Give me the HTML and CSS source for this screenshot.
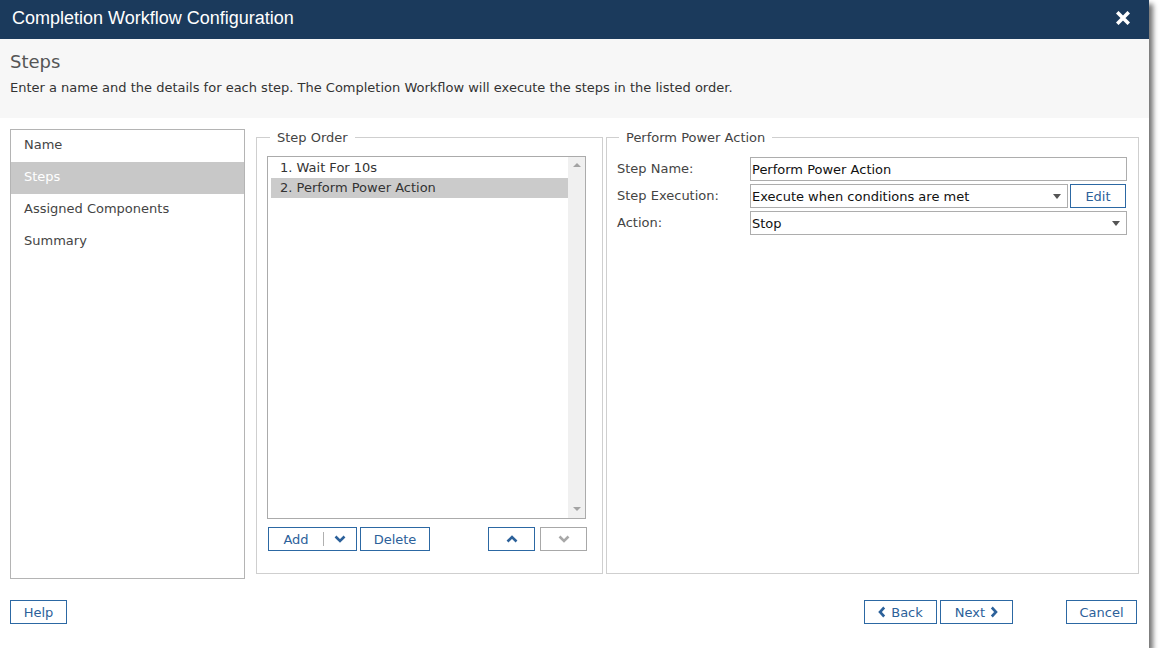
FILE: index.html
```html
<!DOCTYPE html>
<html>
<head>
<meta charset="utf-8">
<link rel="stylesheet" href="styles.css">
</head>
<body>
<div class="dialog">
  <div class="titlebar">
    <span class="title">Completion Workflow Configuration</span>
    <svg class="close" width="14" height="14" viewBox="0 0 14 14"><path d="M2.5 2.5 L11.5 11.5 M11.5 2.5 L2.5 11.5" stroke="#fff" stroke-width="3.6" stroke-linecap="square"/></svg>
  </div>
  <div class="header">
    <h1 class="heading">Steps</h1>
    <p class="desc">Enter a name and the details for each step. The Completion Workflow will execute the steps in the listed order.</p>
  </div>
  <div class="main">
    <ul class="nav">
      <li class="nav-item">Name</li>
      <li class="nav-item active">Steps</li>
      <li class="nav-item">Assigned Components</li>
      <li class="nav-item">Summary</li>
    </ul>
    <fieldset class="group steporder">
      <legend class="legend">Step Order</legend>
      <div class="listbox">
        <ul class="list">
          <li class="list-item">1. Wait For 10s</li>
          <li class="list-item selected">2. Perform Power Action</li>
        </ul>
        <div class="scrollbar">
          <span class="arrow-up"></span>
          <span class="arrow-down"></span>
        </div>
      </div>
      <div class="list-actions">
        <div class="split">
          <button class="btn split-main">Add</button>
          <span class="split-div"></span>
          <button class="btn split-toggle"><svg width="12" height="8" viewBox="0 0 12 8"><path d="M1.5 1.5 L6 6 L10.5 1.5" fill="none" stroke="#2c619a" stroke-width="2.6"/></svg></button>
        </div>
        <button class="btn delete">Delete</button>
        <span class="spacer"></span>
        <button class="btn move"><svg width="12" height="8" viewBox="0 0 12 8"><path d="M1.5 6.5 L6 2 L10.5 6.5" fill="none" stroke="#2c619a" stroke-width="2.6"/></svg></button>
        <button class="btn move disabled"><svg width="12" height="8" viewBox="0 0 12 8"><path d="M1.5 1.5 L6 6 L10.5 1.5" fill="none" stroke="#a8a8a8" stroke-width="2.6"/></svg></button>
      </div>
    </fieldset>
    <fieldset class="group details">
      <legend class="legend">Perform Power Action</legend>
      <div class="form">
        <label class="label">Step Name:</label>
        <input class="field" type="text" value="Perform Power Action">
        <label class="label">Step Execution:</label>
        <div class="field-row">
          <div class="select grow"><span>Execute when conditions are met</span><span class="caret"></span></div>
          <button class="btn edit">Edit</button>
        </div>
        <label class="label">Action:</label>
        <div class="select"><span>Stop</span><span class="caret"></span></div>
      </div>
    </fieldset>
  </div>
  <div class="footer">
    <button class="btn help">Help</button>
    <span class="spacer"></span>
    <button class="btn nav-btn"><svg width="8" height="12" viewBox="0 0 8 12"><path d="M6.2 1.5 L2 6 L6.2 10.5" fill="none" stroke="#2c619a" stroke-width="2.6"/></svg>Back</button>
    <button class="btn nav-btn next">Next<svg width="8" height="12" viewBox="0 0 8 12"><path d="M1.8 1.5 L6 6 L1.8 10.5" fill="none" stroke="#2c619a" stroke-width="2.6"/></svg></button>
    <button class="btn cancel">Cancel</button>
  </div>
</div>
</body>
</html>
```
FILE: styles.css
```css
* { box-sizing: border-box; }
html, body { margin: 0; padding: 0; background: #fff; }
body { font-family: "DejaVu Sans", Verdana, sans-serif; font-size: 13px; color: #444; }

.dialog {
  width: 1149px;
  height: 648px;
  background: #fff;
  box-shadow: 4px 4px 5px rgba(0,0,0,0.55);
  display: flex;
  flex-direction: column;
}

.titlebar {
  height: 39px;
  background: #1b3a5c;
  display: flex;
  align-items: center;
  padding: 0 19px 0 12px;
}
.title {
  font-family: "Liberation Sans", Arial, sans-serif;
  font-size: 18px;
  color: #fff;
  flex: 1;
  padding-bottom: 2px;
}
.close { display: block; margin-bottom: 3px; }

.header {
  height: 79px;
  background: #f7f7f7;
  padding: 12px 10px 0;
}
.heading {
  margin: 0;
  font-size: 18px;
  font-weight: normal;
  line-height: 22px;
  color: #555;
}
.desc {
  margin: 6px 0 0;
  font-size: 13px;
  line-height: 17px;
  color: #333;
}

.main {
  display: flex;
  align-items: flex-start;
  padding: 11px 10px 0 10px;
  height: 461px;
}
.main > * { flex-shrink: 0; }

.nav {
  list-style: none;
  margin: 0;
  padding: 0;
  width: 235px;
  height: 450px;
  border: 1px solid #b4b4b4;
  margin-right: 11px;
}
.nav-item {
  height: 32px;
  line-height: 29px;
  padding-left: 13px;
  color: #444;
}
.nav-item.active { background: #c8c8c8; color: #fff; }

.group {
  margin: 0;
  border: 1px solid #cfcfcf;
  height: 445px;
  padding: 0 10px 10px;
}
.legend {
  margin-left: 3px;
  padding: 0 7px;
  line-height: 17px;
  color: #444;
}

.steporder { width: 347px; margin-right: 3px; }
.details { width: 533px; padding: 0 11px 10px 10px; }
.details .legend { margin-left: 2px; }

.listbox {
  margin-top: 10px;
  width: 319px;
  height: 363px;
  border: 1px solid #ababab;
  display: flex;
}
.list {
  list-style: none;
  margin: 0;
  padding: 1px 0 0 3px;
  flex: 1;
}
.list-item {
  height: 20px;
  line-height: 20px;
  padding-left: 9px;
  color: #333;
}
.list-item.selected { background: #cbcbcb; }
.scrollbar {
  width: 17px;
  background: #f0f0f0;
  display: flex;
  flex-direction: column;
  justify-content: space-between;
  align-items: center;
  padding: 6px 0 7px;
}
.arrow-up, .arrow-down {
  width: 0; height: 0;
  border-left: 4px solid transparent;
  border-right: 4px solid transparent;
}
.arrow-up { border-bottom: 4px solid #a3a3a3; }
.arrow-down { border-top: 4px solid #a3a3a3; }

.list-actions {
  display: flex;
  margin-top: 8px;
  padding-left: 1px;
  width: 320px;
  height: 24px;
}
.spacer { flex: 1; }

.btn {
  font-family: "DejaVu Sans", Verdana, sans-serif;
  font-size: 13px;
  height: 24px;
  background: #fff;
  color: #2c619a;
  border: 1px solid #2c68a3;
  padding: 0;
  display: inline-flex;
  align-items: center;
  justify-content: center;
  gap: 5px;
  cursor: pointer;
}
.split {
  display: flex;
  align-items: center;
  border: 1px solid #2c68a3;
  width: 89px;
  height: 24px;
  margin-right: 3px;
}
.split .btn { border: none; height: 22px; }
.split-main { width: 54px; }
.split-div { width: 1px; height: 14px; background: #b0b0b0; }
.split-toggle { flex: 1; }
.delete { width: 70px; }
.move { width: 47px; }
.move + .move { margin-left: 5px; }
.move.disabled { border-color: #a8a8a8; }

.form {
  display: grid;
  grid-template-columns: 133px 1fr;
  grid-auto-rows: 24px;
  row-gap: 3px;
  margin-top: 11px;
  align-items: center;
}
.label { color: #444; line-height: 24px; }
.field {
  font-family: "DejaVu Sans", Verdana, sans-serif;
  font-size: 13px;
  color: #111;
  height: 24px;
  width: 377px;
  border: 1px solid #adadad;
  padding: 0 1px;
  margin: 0;
  outline: none;
}
.field-row { display: flex; gap: 2px; width: 376px; height: 24px; }
.select {
  height: 24px;
  width: 377px;
  border: 1px solid #adadad;
  display: flex;
  align-items: center;
  padding: 0 6px 0 1px;
  color: #111;
}
.select span:first-child { flex: 1; }
.select.grow { flex: 1; width: auto; }
.caret {
  width: 0; height: 0;
  border-left: 4.5px solid transparent;
  border-right: 4.5px solid transparent;
  border-top: 5px solid #555;
}
.edit { width: 56px; }

.footer {
  display: flex;
  padding: 21px 12px 0 10px;
}
.help { width: 57px; }
.nav-btn { width: 73px; }
.next { margin-left: 3px; }
.cancel { width: 71px; margin-left: 53px; }
```
